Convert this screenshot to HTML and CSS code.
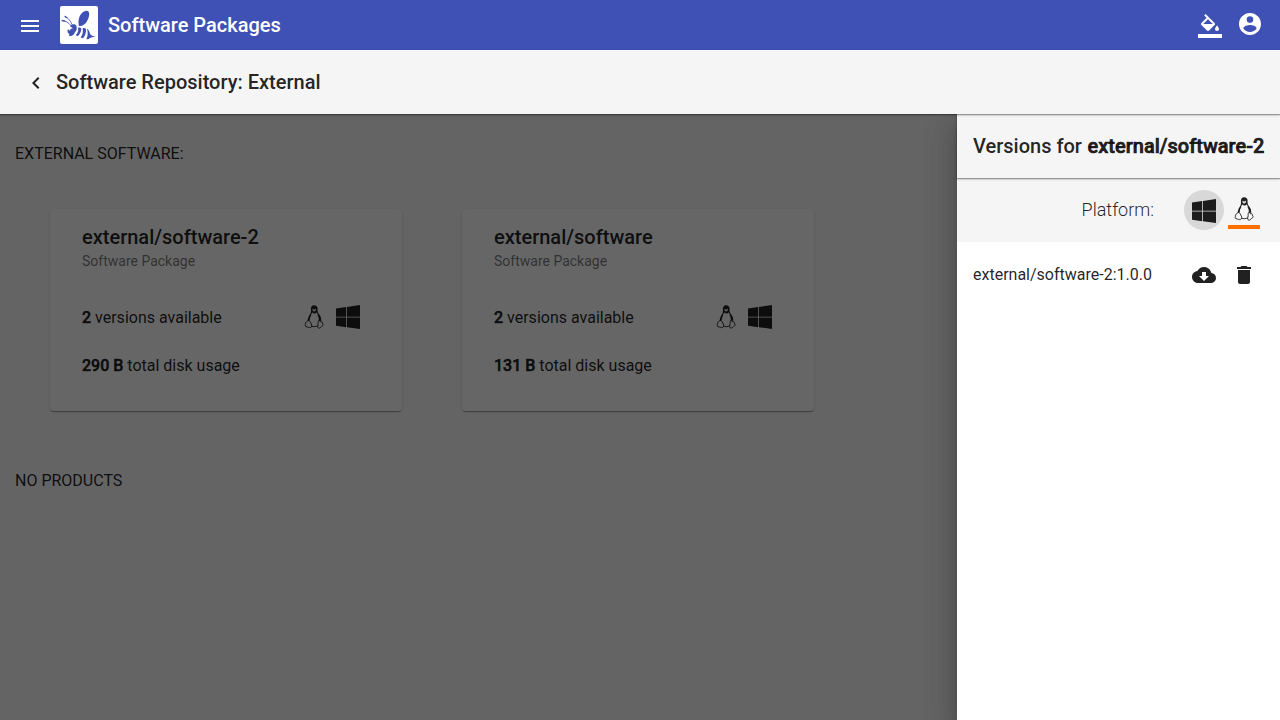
FILE: index.html
```html
<!DOCTYPE html>
<html lang="en">
<head>
<meta charset="utf-8">
<title>Software Packages</title>
<link rel="stylesheet" href="styles.css">
</head>
<body>
<svg class="defs" width="0" height="0">
  <symbol id="windows" viewBox="0 0 24 24"><path d="M0 3.5L10.2 2v9.7H0zM11 1.9L24 0v11.700H11zM0 12.5h10.200v9.700L0 20.800zM11 12.500h13V24l-13-1.800z"/></symbol>
  <symbol id="tux" viewBox="0 0 24 24">
    <path d="M12.100.3C9.800.3 8.800 2 8.900 4.300c.1 2.200.3 3.200-.8 4.900-1.500 2.100-2.200 3.900-2.400 6.200l1.500.5c0-2.200.8-3.800 1.700-5.500.5-1.100.9-2.400 1.300-2.900.9.700 1.600 1 2.300 1 .8 0 1.700-.6 2.400-1 .6 1 .7 2.200 1.400 3.500.8 1.500 1.200 2.900 1 4.500l1.700.6c.7-2.800-.4-5-2.100-7.200-1.500-2-1.300-3.200-1.300-5C15.600 1.700 14.300.3 12.100.3z"/>
    <path class="light" d="M10.400 4.300c0-.8 1.200-.8 1.300.2h.9c.1-1.200 1.500-1 1.500.1 0 .7-.3 1-.3 1L12.200 6.800l-1.600-1.100z"/>
    <path d="M6.600 15c1.200 1 2 2.600 2.800 4.100.6 1.300.4 2.700-.7 3.300-1.300.8-2.700-.4-4.800-.8-.9-.3-.8-1-.5-1.900.2-.8-.2-1.500.1-2 .4-.6 1.200-.4 1.600-1.100.4-.6.500-1.600 1.500-1.600zM17.400 15.200c-1.100.1-1.400 1.300-1.200 3 .1 1.500-.8 2.500-.6 3.700.2 1.300 1.700 1.600 2.700.7 1-.9 1.400-1.400 2.500-2 .6-.4.400-1-.1-1.600-.6-.7-.3-1.900-.9-2.500-.4-.4-.6-.2-1 .1-.6.300-1-.2-1.400-1.400zM9.400 21.200c1.900.7 4.300.6 6.200-.4M8.700 10.300c-.9 1.600-1.600 3-1.500 4.700M16 10.500c1.100 1.500 1.500 3.200 1.200 4.800" fill="none" stroke="currentColor" stroke-width=".9"/>
  </symbol>
  <symbol id="bee" viewBox="0 0 114 114">
    <path d="M57 60C53 46 57 31 65 22c6-7 17-10 21-5 4 7 0 21-6 30-5 8-13 14-23 13z"/>
    <path d="M30 60c5-6 15-7 19-1 3 8 1 15-4 19-1 7-9 14-16 12-3-1-3-3 0-6-6-1-8-9-5-15l4 5c3-4 6-7 11-7-3-3-7-4-9-7z"/>
    <path d="M54 66c5-3 9-1 10 3-1 8-4 15-10 21-3 0-5-1-7-3 7-6 9-13 7-21zM68 66c5-1 8 0 10 3 1 9-2 21-9 28-3 0-5-1-7-3 6-7 8-17 6-28zM81 68c5 3 7 7 9 15 2 5 9 7 17 9-8 1-15 1-18 5-3 3-6 3-10 2 5-9 5-20 2-31z"/>
    <path d="M6 44c10 0 19 5 27 15M14 31c9 4 17 11 22 25" fill="none" stroke="currentColor" stroke-width="2.400"/>
    <path d="M5 43l11 3M14 31l8 5" fill="none" stroke="currentColor" stroke-width="3.600"/>
  </symbol>
</svg>
<div class="app">
  <header class="topbar">
    <svg class="icon menu" viewBox="0 0 24 24"><path d="M3 18h18v-2H3v2zm0-5h18v-2H3v2zm0-7v2h18V6H3z"/></svg>
    <span class="logo"><svg><use href="#bee"/></svg></span>
    <span class="topbar-title">Software Packages</span>
    <svg class="icon fill" viewBox="0 0 24 24"><path d="M16.560 8.940L7.620 0 6.210 1.410l2.380 2.380-5.150 5.150c-.59.59-.59 1.540 0 2.120l5.500 5.500c.29.290.68.440 1.060.440s.77-.15 1.060-.44l5.500-5.500c.59-.58.59-1.530 0-2.120zM5.210 10L10 5.210 14.790 10H5.210zM19 11.500s-2 2.170-2 3.500c0 1.100.9 2 2 2s2-.9 2-2c0-1.330-2-3.500-2-3.500zM0 20h24v4H0z"/></svg>
    <svg class="icon account" viewBox="0 0 24 24"><path d="M12 1C5.930 1 1 5.930 1 12s4.930 11 11 11 11-4.930 11-11S18.070 1 12 1zm0 3.300a3.300 3.300 0 1 1 0 6.600 3.300 3.300 0 0 1 0-6.600zm0 15.620c-2.750 0-5.180-1.410-6.600-3.540.03-2.190 4.400-3.390 6.600-3.390 2.190 0 6.570 1.200 6.600 3.390-1.420 2.130-3.850 3.540-6.600 3.540z"/></svg>
  </header>
  <div class="subbar">
    <svg class="icon" viewBox="0 0 24 24"><path d="M15.410 7.410L14 6l-6 6 6 6 1.410-1.410L10.830 12z"/></svg>
    <h1 class="heading">Software Repository: External</h1>
  </div>
  <div class="container">
    <main class="content">
      <p class="section">EXTERNAL SOFTWARE:</p>
      <div class="cards">
        <article class="card">
          <h2 class="heading">external/software-2</h2>
          <p class="subtitle">Software Package</p>
          <div class="row"><span class="label"><b>2</b> versions available</span><span class="platforms"><svg class="icon"><use href="#tux"/></svg><svg class="icon"><use href="#windows"/></svg></span></div>
          <div class="row"><span class="label"><b>290 B</b> total disk usage</span></div>
        </article>
        <article class="card">
          <h2 class="heading">external/software</h2>
          <p class="subtitle">Software Package</p>
          <div class="row"><span class="label"><b>2</b> versions available</span><span class="platforms"><svg class="icon"><use href="#tux"/></svg><svg class="icon"><use href="#windows"/></svg></span></div>
          <div class="row"><span class="label"><b>131 B</b> total disk usage</span></div>
        </article>
      </div>
      <p class="section">NO PRODUCTS</p>
    </main>
    <div class="backdrop"></div>
    <aside class="drawer">
      <div class="drawer-title"><h2 class="heading">Versions for <b>external/software-2</b></h2></div>
      <div class="platform-bar">
        <span class="platform-label">Platform:</span>
        <span class="button focused"><svg class="icon"><use href="#windows"/></svg></span>
        <span class="button selected"><svg class="icon tux"><use href="#tux"/></svg></span>
      </div>
      <div class="version">
        <span class="version-name">external/software-2:1.0.0</span>
        <span class="button"><svg class="icon" viewBox="0 0 24 24"><path d="M19.350 10.040C18.670 6.590 15.640 4 12 4 9.110 4 6.600 5.640 5.350 8.040 2.340 8.360 0 10.910 0 14c0 3.310 2.690 6 6 6h13c2.760 0 5-2.240 5-5 0-2.640-2.050-4.780-4.650-4.960zM17 13l-5 5-5-5h3V9h4v4h3z"/></svg></span>
        <span class="button"><svg class="icon" viewBox="0 0 24 24"><path d="M6 19c0 1.100.9 2 2 2h8c1.100 0 2-.9 2-2V7H6v12zM19 4h-3.500l-1-1h-5l-1 1H5v2h14V4z"/></svg></span>
      </div>
    </aside>
  </div>
</div>
</body>
</html>
```
FILE: styles.css
```css
* { box-sizing: border-box; }
body { margin: 0; font: 400 16px/24px Roboto, sans-serif; color: rgba(0, 0, 0, .87); }
h1, h2, p { margin: 0; }
b { font-weight: inherit; -webkit-text-stroke: .7px currentColor; }
.defs { position: absolute; }
.app { height: 720px; display: flex; flex-direction: column; overflow: hidden; }
.icon { display: block; width: 24px; height: 24px; fill: currentColor; flex: none; }
.heading { font-size: 20px; font-weight: 500; line-height: 32px; white-space: nowrap; }
.light { fill: #ddd; }

.topbar { height: 50px; flex: none; display: flex; align-items: center; padding: 0 18px; background: #3f51b5; color: #fff; }
.menu { margin: 2px 18px 0 0; }
.logo { width: 38px; height: 38px; background: #fff; border-radius: 2px; color: #3f51b5; }
.logo svg { display: block; width: 38px; height: 38px; fill: currentColor; }
.topbar-title { margin-left: 10px; flex: 1; font-size: 20px; font-weight: 500; }
.fill { margin: 2px 16px 0 0; }
.account { margin-top: -2px; }

.subbar { height: 64px; flex: none; display: flex; align-items: center; gap: 8px; padding: 0 24px; background: #f5f5f5; box-shadow: 0 1px 1px rgba(0, 0, 0, .3), 0 1px 3px rgba(0, 0, 0, .2); z-index: 2; }
.subbar .icon { margin-top: 2px; }

.container { position: relative; flex: 1; overflow: hidden; background: #fafafa; }
.content { padding: 28px 15px; }
.cards { display: flex; gap: 60px; padding: 43px 35px 58px; }
.card { width: 352px; height: 202px; padding: 12px 32px; border-radius: 4px; background: #fff; box-shadow: 0 2px 1px -1px rgba(0, 0, 0, .2), 0 1px 1px rgba(0, 0, 0, .14), 0 1px 3px rgba(0, 0, 0, .12); }
.subtitle { font-size: 14px; line-height: 16px; color: rgba(0, 0, 0, .54); }
.card .row { height: 48px; display: flex; align-items: center; justify-content: space-between; padding-right: 10px; }
.subtitle + .row { margin-top: 24px; }
.label { padding-top: 2px; }
.card b { font-weight: 500; -webkit-text-stroke-width: .5px; }
.drawer b { margin-left: .7px; }
.platforms { display: flex; gap: 10px; }

.backdrop { position: absolute; inset: 0; background: rgba(0, 0, 0, .6); }
.drawer { position: absolute; top: 0; right: 0; bottom: 0; width: 323px; background: #fff; box-shadow: 0 8px 10px -5px rgba(0, 0, 0, .2), 0 16px 24px 2px rgba(0, 0, 0, .14), 0 6px 30px 5px rgba(0, 0, 0, .12); }
.drawer-title { position: relative; height: 64px; display: flex; align-items: center; padding: 0 16px; background: #f5f5f5; box-shadow: 0 1px 1px rgba(0, 0, 0, .3), 0 1px 3px rgba(0, 0, 0, .2); }
.platform-bar, .version { height: 64px; display: flex; align-items: center; padding: 0 16px; }
.platform-bar { background: #f5f5f5; }
.platform-label { flex: 1; margin-right: 30px; text-align: right; font-size: 18px; font-weight: 300; }
.button { width: 40px; height: 40px; display: flex; align-items: center; justify-content: center; border-radius: 50%; }
.focused { background: #d8d8d8; }
.focused .icon { margin-top: 2px; }
.selected { position: relative; }
.selected::after { content: ""; position: absolute; left: 4px; top: 35px; width: 32px; height: 4px; background: #ff6f00; }
.tux { margin-top: -2px; }
.version-name { flex: 1; padding-top: 2px; }
.version .icon { margin-top: 2px; }
```
